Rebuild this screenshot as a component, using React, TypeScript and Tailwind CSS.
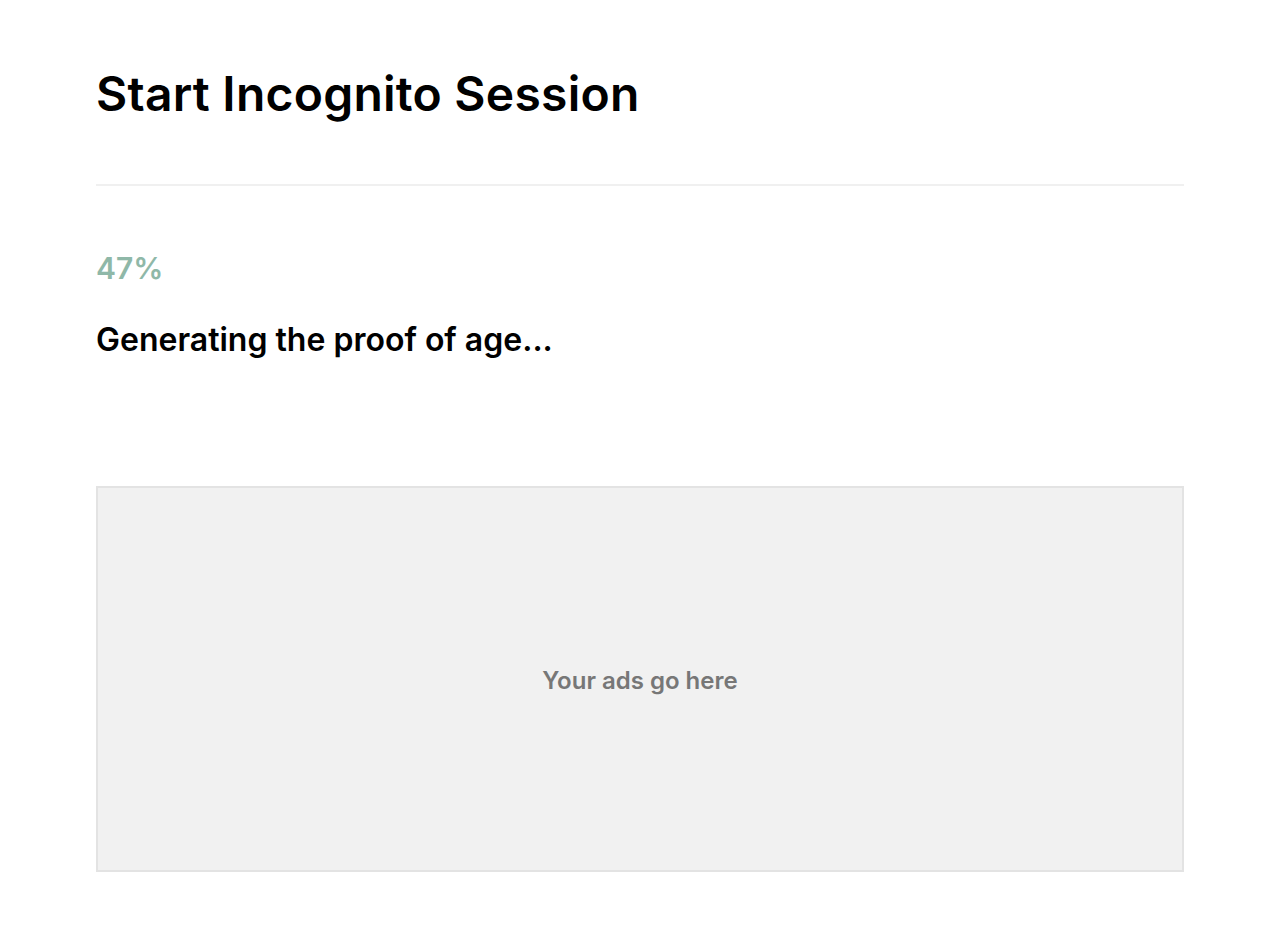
export default function App() {
    return (
        <div className="min-h-screen bg-white px-24 pt-[58px] font-['Inter',sans-serif] text-black">
            <h1 className="text-[48px] leading-[72px] font-semibold tracking-[0.005em]">Start Incognito Session</h1>
            <div className="mt-[54px] h-[2px] bg-[#f0f0f0]" />
            <div className="pt-[62px]">
                <p className="text-[30px] leading-[40px] font-semibold text-[#8fb8a8]">47%</p>
                <p className="mt-[32px] text-[32px] leading-[40px] font-semibold">Generating the proof of age...</p>
            </div>
            <div className="mt-[126px] flex h-[386px] items-center justify-center border-2 border-[#e3e3e3] bg-[#f1f1f1] pt-[4px]">
                <span className="text-[24px] font-semibold text-[#777777]">Your ads go here</span>
            </div>
        </div>
    );
}
